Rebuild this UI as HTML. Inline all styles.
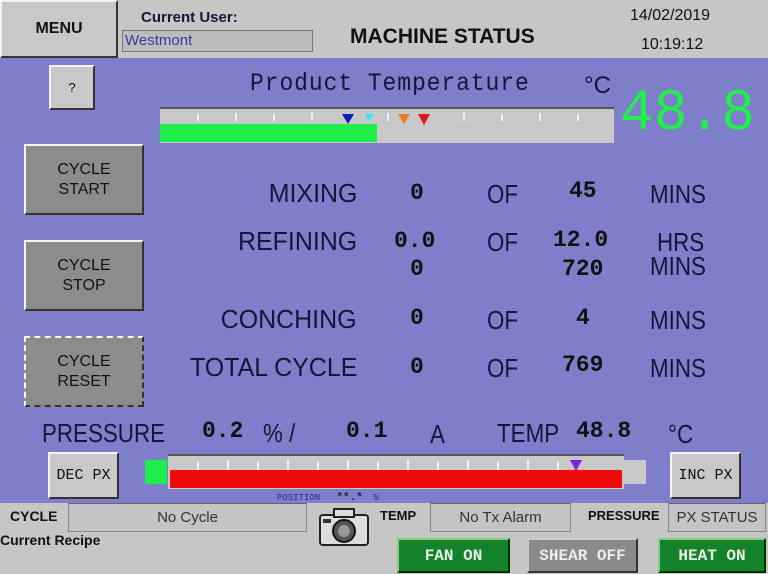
<!DOCTYPE html>
<html><head><meta charset="utf-8"><style>
*{margin:0;padding:0;box-sizing:border-box}
body{width:768px;height:574px;overflow:hidden;background:#7f7ecb;font-family:"Liberation Sans",sans-serif;position:relative;color:#15153a}
.a{position:absolute;white-space:nowrap}
.btn{position:absolute;background:#c8c8c8;border:2px solid;border-color:#f4f4f4 #333 #333 #f4f4f4;display:flex;align-items:center;justify-content:center;text-align:center;color:#111}
.gb{background:#8c8c8c;font-size:16px;line-height:20px}
.lbl{font-size:26px;transform:scaleX(.96);transform-origin:right center;text-align:right}
.v{font-family:"Liberation Mono",monospace;font-weight:bold;font-size:23px;color:#111}
.u{font-size:26px;transform:scaleX(.86);transform-origin:left center}
.fld{position:absolute;background:#c4c4c4;border:1px solid #888;border-top-color:#666;display:flex;align-items:center;justify-content:center;font-size:15px;color:#333}
.gr{position:absolute;background:#14822a;color:#e8f0e8;font-size:16px;display:flex;align-items:center;justify-content:center;border:2px solid;border-color:#8c8 #030 #030 #8c8;font-family:"Liberation Mono",monospace;font-weight:bold}
</style></head><body>
<div class="a" style="left:0;top:0;width:768px;height:58px;background:#c6c6c6"></div>
<div class="btn" style="left:0;top:0;width:118px;height:58px;font-size:16px;font-weight:bold">MENU</div>
<div class="a" style="left:141px;top:9px;font-size:15px;font-weight:bold">Current User:</div>
<div class="a" style="left:122px;top:30px;width:191px;height:22px;background:#bdbdbd;border:1px solid #777;font-size:15px;color:#3a3aa0;padding-left:2px;line-height:20px">Westmont</div>
<div class="a" style="left:350px;top:25px;font-size:21px;font-weight:bold;color:#111">MACHINE STATUS</div>
<div class="a" style="left:630px;top:7px;font-size:16px;color:#111">14/02/2019</div>
<div class="a" style="left:641px;top:36px;font-size:16px;color:#111">10:19:12</div>

<div class="btn" style="left:49px;top:65px;width:46px;height:45px;font-size:13px">?</div>
<div class="a" style="left:250px;top:69px;font-family:'Liberation Mono',monospace;font-size:25px;letter-spacing:1px;transform:scaleX(.92);transform-origin:left">Product Temperature</div>
<div class="a" style="left:584px;top:72px;font-size:24px">°C</div>
<div class="a" style="left:160px;top:107px;width:454px;height:36px;background:#c8c8c8;border-top:2px solid #555"></div>
<div class="a" style="left:160px;top:124px;width:217px;height:18px;background:#1fee4a"></div>
<svg class="a" style="left:160px;top:107px" width="454" height="20">
<g stroke="#fff" stroke-width="1.5"><line x1="38" y1="7" x2="38" y2="14"/><line x1="76" y1="6" x2="76" y2="14"/><line x1="114" y1="7" x2="114" y2="14"/><line x1="152" y1="6" x2="152" y2="14"/><line x1="228" y1="6" x2="228" y2="14"/><line x1="304" y1="6" x2="304" y2="14"/><line x1="342" y1="7" x2="342" y2="14"/><line x1="380" y1="6" x2="380" y2="14"/><line x1="418" y1="7" x2="418" y2="14"/></g>
<polygon points="182,7 194,7 188,17" fill="#1020c0"/><polygon points="205,7 213,7 209,15" fill="#30e8f0"/>
<polygon points="238,7 250,7 244,17" fill="#f07a20"/><polygon points="258,7 270,7 264,18" fill="#e01818"/>
</svg>
<div class="a" style="left:620px;top:82px;font-family:'Liberation Mono',monospace;font-size:58px;color:#1ff04a;transform:scaleX(.97);transform-origin:left">48.8</div>

<div class="btn gb" style="left:24px;top:144px;width:120px;height:71px">CYCLE<br>START</div>
<div class="btn gb" style="left:24px;top:240px;width:120px;height:71px">CYCLE<br>STOP</div>
<div class="btn gb" style="left:24px;top:336px;width:120px;height:71px;border-style:dashed">CYCLE<br>RESET</div>

<div class="a lbl" style="right:411px;top:178px">MIXING</div>
<div class="a lbl" style="right:411px;top:226px">REFINING</div>
<div class="a lbl" style="right:411px;top:304px">CONCHING</div>
<div class="a lbl" style="right:411px;top:352px">TOTAL CYCLE</div>
<div class="a v" style="left:410px;top:180px">0</div>
<div class="a v" style="left:394px;top:228px">0.0</div>
<div class="a v" style="left:410px;top:256px">0</div>
<div class="a v" style="left:410px;top:305px">0</div>
<div class="a v" style="left:410px;top:354px">0</div>
<div class="a u" style="left:487px;top:179px">OF</div>
<div class="a u" style="left:487px;top:227px">OF</div>
<div class="a u" style="left:487px;top:305px">OF</div>
<div class="a u" style="left:487px;top:353px">OF</div>
<div class="a v" style="left:569px;top:178px">45</div>
<div class="a v" style="left:553px;top:227px">12.0</div>
<div class="a v" style="left:562px;top:256px">720</div>
<div class="a v" style="left:576px;top:305px">4</div>
<div class="a v" style="left:562px;top:352px">769</div>
<div class="a u" style="left:650px;top:179px">MINS</div>
<div class="a u" style="left:657px;top:227px">HRS</div>
<div class="a u" style="left:650px;top:251px">MINS</div>
<div class="a u" style="left:650px;top:305px">MINS</div>
<div class="a u" style="left:650px;top:353px">MINS</div>

<div class="a u" style="left:42px;top:418px">PRESSURE</div>
<div class="a v" style="left:202px;top:418px">0.2</div>
<div class="a u" style="left:263px;top:418px">% /</div>
<div class="a v" style="left:346px;top:418px">0.1</div>
<div class="a u" style="left:430px;top:419px">A</div>
<div class="a u" style="left:497px;top:418px">TEMP</div>
<div class="a v" style="left:576px;top:418px">48.8</div>
<div class="a u" style="left:668px;top:419px">°C</div>

<div class="btn" style="left:48px;top:452px;width:71px;height:47px;font-size:15px;font-family:'Liberation Mono',monospace">DEC PX</div>
<div class="btn" style="left:670px;top:452px;width:71px;height:47px;font-size:15px;font-family:'Liberation Mono',monospace">INC PX</div>
<div class="a" style="left:145px;top:460px;width:22px;height:24px;background:#1fee4a"></div>
<div class="a" style="left:624px;top:460px;width:22px;height:24px;background:#c8c8c8"></div>
<div class="a" style="left:168px;top:454px;width:456px;height:35px;background:#c8c8c8;border-top:2px solid #555"></div>
<div class="a" style="left:170px;top:470px;width:452px;height:18px;background:#f00a0a"></div>
<svg class="a" style="left:168px;top:456px" width="456" height="16">
<g stroke="#fff" stroke-width="1.5"><line x1="30" y1="6" x2="30" y2="14"/><line x1="60" y1="4" x2="60" y2="14"/><line x1="90" y1="6" x2="90" y2="14"/><line x1="120" y1="4" x2="120" y2="14"/><line x1="150" y1="6" x2="150" y2="14"/><line x1="180" y1="4" x2="180" y2="14"/><line x1="210" y1="6" x2="210" y2="14"/><line x1="240" y1="4" x2="240" y2="14"/><line x1="270" y1="6" x2="270" y2="14"/><line x1="300" y1="4" x2="300" y2="14"/><line x1="330" y1="6" x2="330" y2="14"/><line x1="360" y1="4" x2="360" y2="14"/><line x1="390" y1="6" x2="390" y2="14"/></g>
<polygon points="402,4 414,4 408,15" fill="#8020e0"/></svg>
<div class="a" style="left:277px;top:492px;font-size:9px;font-family:'Liberation Mono',monospace;color:#2a2a90">POSITION &nbsp;&nbsp;<b style="font-size:11px;color:#223">**.*</b> &nbsp;%</div>

<div class="a" style="left:0;top:503px;width:768px;height:71px;background:#c6c6c6"></div>
<div class="a" style="left:10px;top:508px;font-size:14px;font-weight:bold;color:#111">CYCLE</div>
<div class="fld" style="left:68px;top:503px;width:239px;height:29px">No Cycle</div>
<svg class="a" style="left:318px;top:505px" width="52" height="42"><rect x="2" y="10" width="48" height="30" rx="3" fill="#ddd" stroke="#222" stroke-width="2"/><rect x="16" y="4" width="20" height="8" fill="#ddd" stroke="#222" stroke-width="2"/><circle cx="26" cy="26" r="11" fill="#555" stroke="#111" stroke-width="2"/><circle cx="26" cy="26" r="6" fill="#999"/><rect x="5" y="14" width="8" height="4" fill="#333"/></svg>
<div class="a" style="left:380px;top:508px;font-size:13px;font-weight:bold;color:#111">TEMP</div>
<div class="fld" style="left:430px;top:503px;width:141px;height:29px">No Tx Alarm</div>
<div class="a" style="left:588px;top:508px;font-size:13px;font-weight:bold;color:#111">PRESSURE</div>
<div class="fld" style="left:668px;top:503px;width:98px;height:29px">PX STATUS</div>
<div class="a" style="left:0;top:532px;font-size:14px;font-weight:bold;color:#111">Current Recipe</div>
<div class="gr" style="left:397px;top:538px;width:113px;height:35px">FAN ON</div>
<div class="gr" style="left:527px;top:538px;width:111px;height:35px;background:#8a8a8a;border-color:#ccc #333 #333 #ccc">SHEAR OFF</div>
<div class="gr" style="left:658px;top:538px;width:108px;height:35px">HEAT ON</div>
</body></html>
